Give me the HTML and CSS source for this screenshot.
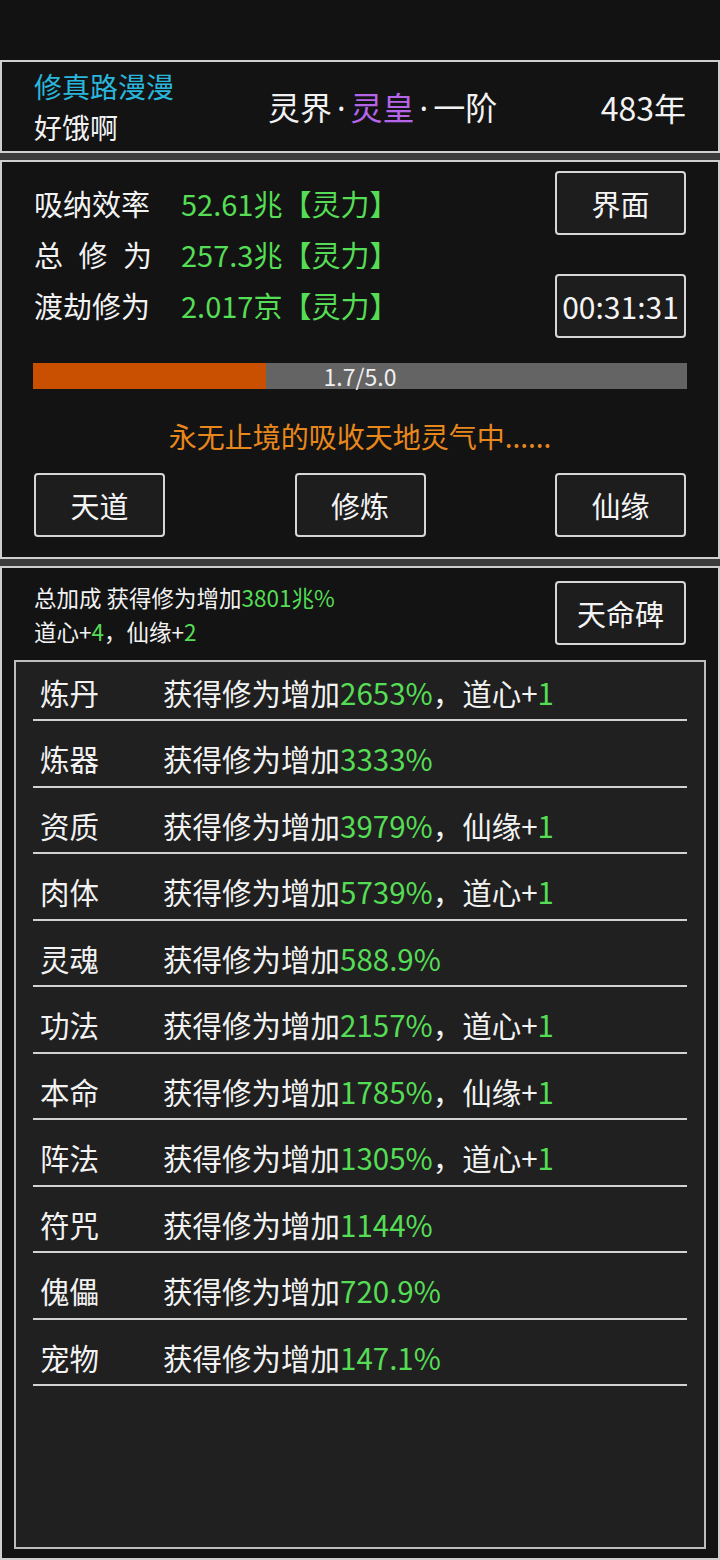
FILE: index.html
```html
<!DOCTYPE html>
<html lang="zh-CN">
<head>
<meta charset="utf-8">
<title>修真</title>
<link rel="stylesheet" href="styles.css">
</head>
<body>
<div class="topbar"></div>
<div class="stack">
  <section class="panel head">
    <div class="who">
      <div class="title">修真路漫漫</div>
      <div class="name">好饿啊</div>
    </div>
    <div class="realm">灵界<span class="dot">·</span><span class="purple">灵皇</span><span class="dot">·</span>一阶</div>
    <div class="age">483年</div>
  </section>

  <section class="panel main">
    <div class="top">
      <div class="stats">
        <div class="stat"><span class="lbl">吸纳效率</span><span class="val">52.61兆【灵力】</span></div>
        <div class="stat"><span class="lbl spread"><span>总</span><span>修</span><span>为</span></span><span class="val">257.3兆【灵力】</span></div>
        <div class="stat"><span class="lbl">渡劫修为</span><span class="val">2.017京【灵力】</span></div>
      </div>
      <div class="side">
        <div class="btn">界面</div>
        <div class="btn timer">00:31:31</div>
      </div>
    </div>
    <div class="bar"><div class="fill" style="width:35.6%"></div><span class="bartext">1.7/5.0</span></div>
    <div class="status">永无止境的吸收天地灵气中......</div>
    <div class="actions">
      <div class="btn">天道</div>
      <div class="btn">修炼</div>
      <div class="btn">仙缘</div>
    </div>
  </section>

  <section class="panel bonus">
    <div class="bonus-head">
      <div class="summary">
        <div>总加成 获得修为增加<span class="g">3801兆%</span></div>
        <div>道心+<span class="g">4</span>，仙缘+<span class="g">2</span></div>
      </div>
      <div class="btn">天命碑</div>
    </div>
    <div class="list">
      <div class="row"><span class="cat">炼丹</span><span>获得修为增加<span class="g">2653%</span>，道心+<span class="g">1</span></span></div>
      <div class="row"><span class="cat">炼器</span><span>获得修为增加<span class="g">3333%</span></span></div>
      <div class="row"><span class="cat">资质</span><span>获得修为增加<span class="g">3979%</span>，仙缘+<span class="g">1</span></span></div>
      <div class="row"><span class="cat">肉体</span><span>获得修为增加<span class="g">5739%</span>，道心+<span class="g">1</span></span></div>
      <div class="row"><span class="cat">灵魂</span><span>获得修为增加<span class="g">588.9%</span></span></div>
      <div class="row"><span class="cat">功法</span><span>获得修为增加<span class="g">2157%</span>，道心+<span class="g">1</span></span></div>
      <div class="row"><span class="cat">本命</span><span>获得修为增加<span class="g">1785%</span>，仙缘+<span class="g">1</span></span></div>
      <div class="row"><span class="cat">阵法</span><span>获得修为增加<span class="g">1305%</span>，道心+<span class="g">1</span></span></div>
      <div class="row"><span class="cat">符咒</span><span>获得修为增加<span class="g">1144%</span></span></div>
      <div class="row"><span class="cat">傀儡</span><span>获得修为增加<span class="g">720.9%</span></span></div>
      <div class="row"><span class="cat">宠物</span><span>获得修为增加<span class="g">147.1%</span></span></div>
    </div>
  </section>
</div>
</body>
</html>
```
FILE: styles.css
```css
* { box-sizing: border-box; }
html, body { margin: 0; padding: 0; height: 1560px; overflow: hidden; }
body {
  background: #121212;
  color: #f2f2f2;
  font-family: "Noto Sans CJK SC", "Noto Sans", sans-serif;
  display: flex;
  flex-direction: column;
}
.topbar { height: 60px; background: #121212; flex: 0 0 auto; }
.stack {
  flex: 1;
  display: flex;
  flex-direction: column;
  gap: 7px;
  background: #3c3c3c;
}
.panel {
  background: #131313;
  border: 2px solid #cfcfcf;
}
.g { color: #55dd55; }
.purple { color: #b565e8; }

/* header */
.head {
  height: 93px;
  display: flex;
  align-items: center;
  padding: 0 32px;
}
.who { flex: 0 0 234px; font-size: 28px; line-height: 41px; }
.title { color: #2ab6dc; }
.realm { font-size: 32px; line-height: 1; }
.dot { font-family: "Noto Sans", sans-serif; padding: 0 5px; }
.age { margin-left: auto; font-size: 32px; line-height: 1; }

/* main */
.main {
  height: 399px;
  padding: 9px 32px 0;
}
.top { display: flex; justify-content: space-between; }
.stats { padding-top: 6px; }
.stat { display: flex; align-items: center; height: 51px; font-size: 29px; }
.lbl { width: 118px; margin-right: 29px; }
.spread { display: flex; justify-content: space-between; }
.val { color: #55dd55; }
.side { display: flex; flex-direction: column; gap: 39px; }
.btn {
  width: 131px;
  height: 64px;
  border: 2px solid #d6d6d6;
  border-radius: 4px;
  background: #1d1d1d;
  display: flex;
  align-items: center;
  justify-content: center;
  font-size: 29px;
  color: #f4f4f4;
}
.timer { font-size: 30px; }
.bar {
  position: relative;
  height: 26px;
  margin: 25px -1px 0;
  background: #646464;
  display: flex;
  justify-content: center;
  align-items: center;
}
.fill { position: absolute; left: 0; top: 0; bottom: 0; background: #c85000; }
.bartext { position: relative; font-size: 23px; line-height: 26px; color: #f0f0f0; }
.status {
  margin-top: 27px;
  height: 40px;
  line-height: 40px;
  text-align: center;
  font-size: 28px;
  color: #e8881c;
}
.actions {
  margin-top: 17px;
  display: flex;
  justify-content: space-between;
}

/* bonus */
.bonus {
  flex: 1;
  display: flex;
  flex-direction: column;
  padding: 12px 12px 9px;
}
.bonus-head {
  display: flex;
  justify-content: space-between;
  align-items: flex-start;
  padding: 0 20px;
  height: 68px;
}
.summary { font-size: 22.5px; line-height: 34px; }
.bonus-head .btn { margin-top: 1px; }
.list {
  flex: 1;
  margin-top: 12px;
  background: #202020;
  border: 2px solid #bdbdbd;
  padding: 0 17px;
  display: flex;
  flex-direction: column;
  gap: 7.5px;
}
.row {
  height: 59px;
  flex: 0 0 auto;
  border-bottom: 2px solid #d2d2d2;
  display: flex;
  align-items: center;
  padding: 4px 0 0 7px;
  font-size: 29.5px;
  line-height: 1;
}
.cat { width: 123px; }
```
